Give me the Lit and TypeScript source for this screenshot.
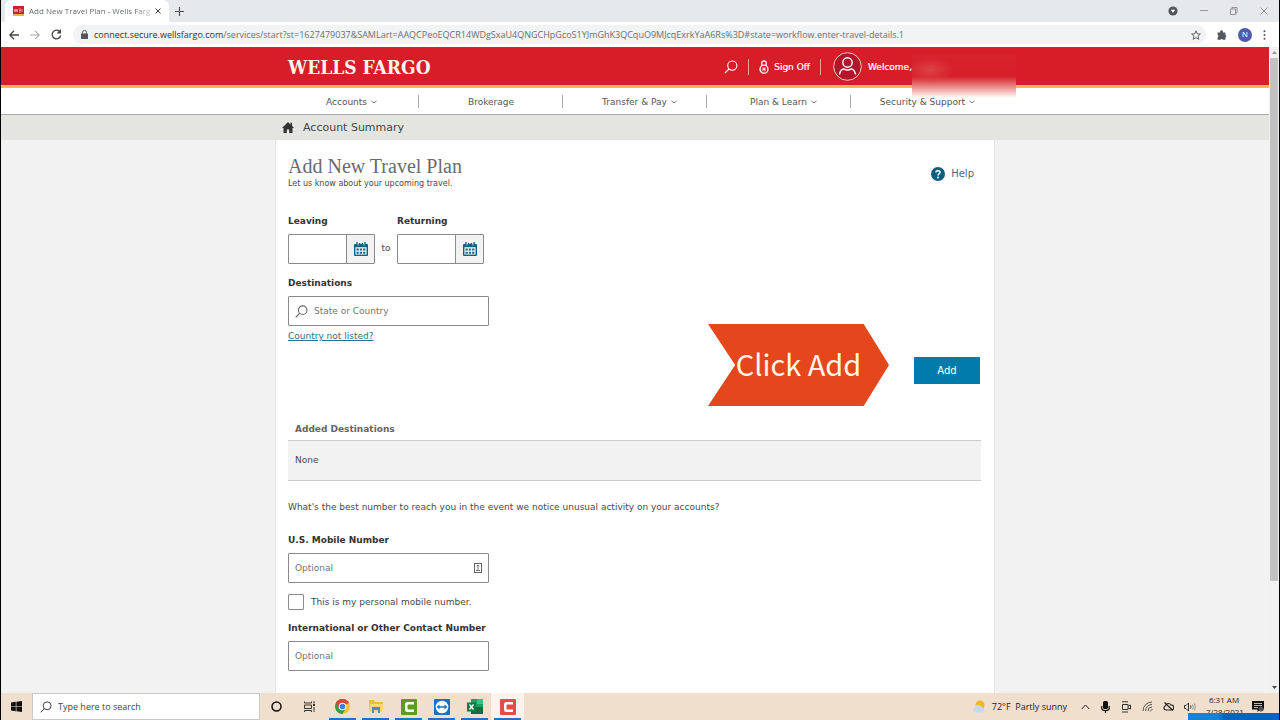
import { LitElement, html, css, svg } from "lit";
import { customElement } from "lit/decorators.js";

const chevron = html`<svg class="chev" viewBox="0 0 6 4" width="6" height="4" aria-hidden="true"><path d="M.5 .7 Q3 4.6 5.5 .7" fill="none" stroke="#777" stroke-width="1"/></svg>`;

const magnifier = (size: number, color: string, width = 1.2) => html`<svg width=${size} height=${size} viewBox="0 0 14 14" fill="none" stroke=${color} stroke-width=${width} aria-hidden="true"><circle cx="8.3" cy="5.6" r="4.6"/><path d="M5 9 L.8 13.2"/></svg>`;

const calendar = html`<svg width="14" height="14" viewBox="0 0 14 14" aria-hidden="true">
  <path d="M1 2h12a1 1 0 0 1 1 1v10a1 1 0 0 1-1 1H1a1 1 0 0 1-1-1V3a1 1 0 0 1 1-1z" fill="#0c6186"/>
  <path d="M1.4 5.2h11.2v7.4H1.4z" fill="#f2f5f6"/>
  <path d="M3 0v3.6M11 0v3.6M5.6 1v2M8.4 1v2" stroke="#0c6186" stroke-width="1.4"/>
  <path d="M4 1.6v2M10 1.6v2" stroke="#f2f5f6" stroke-width=".7"/>
  ${[0, 1, 2].map(c => svg`<path d="M${2.5 + c * 3.3} 6.6h2.3v2H${2.5 + c * 3.3}zM${2.5 + c * 3.3} 9.8h2.3v2H${2.5 + c * 3.3}z" fill="#1a6b8e"/>`)}
</svg>`;

const camtasia = (color: string) => html`<svg width="16" height="16" viewBox="0 0 16 16"><rect width="16" height="16" rx="1" fill=${color}/><path d="M13 3H6.500A2.500 2.500 0 0 0 4 5.500v5A2.500 2.500 0 0 0 6.500 13H13v-2.500H7.500a1 1 0 0 1-1-1v-3a1 1 0 0 1 1-1H13z" fill="#fff"/></svg>`;

@customElement("browser-chrome")
class BrowserChrome extends LitElement {
  static styles = css`
    :host { display: block; font: 9px/14px "Open Sans", "Noto Sans", sans-serif; color: #5f6368; }
    button { border: 0; padding: 0; background: none; display: flex; align-items: center; justify-content: center; }
    .tabs { height: 22px; background: #e5e9eb; display: flex; align-items: center; }
    .tab { align-self: stretch; margin-left: 4px; padding: 0 8px; background: #fff; border-radius: 6px 6px 0 0; display: flex; align-items: center; gap: 5px; font-size: 8px; }
    .title { white-space: nowrap; background: linear-gradient(90deg, #5f6368 88%, #c8cacc); -webkit-background-clip: text; background-clip: text; color: transparent; }
    .plus { margin-left: 6px; }
    .win { margin-left: auto; display: flex; gap: 22px; padding-right: 11px; align-items: center; }
    .bar { height: 25px; background: #fff; display: flex; align-items: center; padding: 0 13px 0 8px; gap: 11px; }
    .omni { flex: 1; display: flex; align-items: center; gap: 6px; height: 19px; border-radius: 10px; background: #f1f3f4; padding: 0 5px 0 8px; }
    .url { flex: 1; min-width: 0; color: #6b7075; }
    .host { color: #333; }
    .avatar { width: 14px; height: 14px; border-radius: 50%; background: #4f5bab; color: #fff; font-size: 8px; }
  `;
  render() {
    return html`
      <div class="tabs">
        <div class="tab">
          <svg width="11" height="10" viewBox="0 0 11 10"><path fill="#cd2027" d="M0 0h11v9H0z"/><path fill="#efb052" d="M0 8h11v2H0z"/><path d="M1 3l1 3 1-3 1 3 1-3M6 3h2M6 4.500h2M6 6h2M9 3v3" stroke="#f7c9c2" stroke-width=".7" fill="none"/></svg>
          <span class="title">Add New Travel Plan - Wells Farg</span>
          <button aria-label="Close tab"><svg width="6" height="6" viewBox="0 0 6 6"><path d="M.5 .5l5 5M5.500 .5l-5 5" stroke="#444"/></svg></button>
        </div>
        <button class="plus" aria-label="New tab"><svg width="9" height="9" viewBox="0 0 9 9"><path d="M4.500 0v9M0 4.500h9" stroke="#555" stroke-width="1.200"/></svg></button>
        <div class="win">
          <svg width="10" height="10" viewBox="0 0 10 10"><circle cx="5" cy="5" r="4.600" fill="#54585c"/><path d="M2.800 3.800h4.400L5 6.800z" fill="#fff"/></svg>
          <button aria-label="Minimize"><svg width="8" height="8"><path d="M0 3.500h8" stroke="#999"/></svg></button>
          <button aria-label="Restore"><svg width="8" height="8" viewBox="0 0 8 8" fill="none" stroke="#888" stroke-width=".9"><path d="M.5 2h5v5.500h-5zM2 2V.5h5V6H5.500"/></svg></button>
          <button aria-label="Close"><svg width="8" height="8" viewBox="0 0 8 8"><path d="M.5 .5l7 7M7.500 .5l-7 7" stroke="#888" stroke-width=".9"/></svg></button>
        </div>
      </div>
      <div class="bar">
        <button aria-label="Back"><svg width="10" height="10" viewBox="0 0 10 10"><path d="M10 5H1M5 .8L.8 5 5 9.200" fill="none" stroke="#444" stroke-width="1.300"/></svg></button>
        <button aria-label="Forward"><svg width="10" height="10" viewBox="0 0 10 10"><path d="M0 5h9M5 .8L9.200 5 5 9.200" fill="none" stroke="#aaa" stroke-width="1.100"/></svg></button>
        <button aria-label="Reload"><svg width="11" height="11" viewBox="0 0 11 11"><path d="M9 3A4.300 4.300 0 1 0 9.700 6.500" fill="none" stroke="#444" stroke-width="1.300"/><path d="M10 0v4.400H5.600z" fill="#444"/></svg></button>
        <div class="omni">
          <svg width="7" height="9" viewBox="0 0 7 9"><rect y="3.500" width="7" height="5.500" rx=".6" fill="#54585c"/><path d="M1.600 4V2.300a1.900 1.900 0 0 1 3.800 0V4" fill="none" stroke="#54585c" stroke-width="1"/></svg>
          <div class="url"><span class="host">connect.secure.wellsfargo.com</span>/services/start?st=1627479037&amp;SAMLart=AAQCPeoEQCR14WDgSxaU4QNGCHpGcoS1YJmGhK3QCquO9MJcqExrkYaA6Rs%3D#state=workflow.enter-travel-details.1</div>
          <svg width="10" height="10" viewBox="0 0 10 10"><path d="M5 .8l1.200 3 3.200.2L7 6.100l.8 3.200L5 7.600 2.200 9.300 3 6.100.6 4l3.200-.2z" fill="none" stroke="#555" stroke-width=".9"/></svg>
        </div>
        <svg width="10" height="10" viewBox="0 0 10 10"><path d="M.6 2.500h2.600a1.500 1.500 0 1 1 2.600 0h2.600v2.400a1.400 1.400 0 0 1 0 2.600v2.300H6.100a1.400 1.400 0 0 0-2.600 0H.6V7.200a1.300 1.300 0 0 0 0-2.400z" fill="#54585c"/></svg>
        <button class="avatar" aria-label="Profile">N</button>
        <button aria-label="Menu"><svg width="3" height="10" viewBox="0 0 3 10" fill="#555"><circle cx="1.500" cy="1.200" r="1"/><circle cx="1.500" cy="5" r="1"/><circle cx="1.500" cy="8.800" r="1"/></svg></button>
      </div>`;
  }
}

@customElement("bank-header")
class BankHeader extends LitElement {
  static styles = css`
    :host { display: block; font: 9px/12px "DejaVu Sans", Verdana, sans-serif; color: #555; }
    .inner { width: 720px; max-width: 100%; margin: 0 auto; box-sizing: border-box; }
    .brand { background: #d71e28; border-bottom: 3px solid #f0b955; border-top: 1px solid #bb3038; }
    .brand .inner { height: 37px; padding: 0 0 0 13px; display: flex; align-items: center; position: relative; }
    .logo { flex: 1; font: bold 19px/24px "DejaVu Serif Condensed", "Liberation Serif", serif; color: #fff3ec; text-decoration: none; }
    .tools { display: flex; align-items: center; color: #fff; margin-right: 83px; }
    .tools a, .tools button { color: #fff; text-decoration: none; display: flex; align-items: center; gap: 5px; background: none; border: 0; padding: 0; font: inherit; -webkit-text-stroke: .2px #fff; }
    .sep { width: 1px; height: 16px; background: #f0a49f; margin: 0 10px; }
    .user { display: flex; align-items: center; gap: 6px; margin-left: 2px; -webkit-text-stroke: .2px #fff; }
    .redact { position: absolute; left: 637px; top: 6px; width: 104px; height: 44px; z-index: 1; background: radial-gradient(ellipse 24px 12px at 18px 16px, #dc4148, transparent), linear-gradient(#d8232c 0, #d71e28 50%, #df4e50 62%, #f1aca7 82%, #fbe9e500 100%); }
    nav { background: #fff; border-bottom: 1px solid #aaa; }
    ul { list-style: none; padding: 0; margin: 0; display: grid; grid-template-columns: repeat(5, 1fr); }
    li { height: 26px; box-sizing: border-box; padding-top: 1px; display: flex; align-items: center; justify-content: center; background: linear-gradient(#aaa, #aaa) right center / 1px 13px no-repeat; }
    li:last-child { background: none; }
    .menu { padding-left: 9px; }
    li a { color: #555; text-decoration: none; display: flex; align-items: center; gap: 4px; }
    .crumb { background: #e4e5e1; }
    .crumb .inner { height: 25px; padding-left: 7px; display: flex; align-items: center; gap: 9px; font-size: 11px; color: #444; }
    .crumb a { color: inherit; text-decoration: none; }
  `;
  render() {
    const items = [["Accounts", 1], ["Brokerage", 0], ["Transfer & Pay", 1], ["Plan & Learn", 1], ["Security & Support", 1]];
    return html`
      <header class="brand"><div class="inner">
        <a class="logo" href="#">WELLS FARGO</a>
        <div class="tools">
          <button aria-label="Search">${magnifier(14, "#fff", 1.1)}</button>
          <span class="sep"></span>
          <a href="#"><svg width="10" height="14" viewBox="0 0 10 14" fill="none" stroke="#fff"><circle cx="5" cy="9.200" r="4" stroke-width="1.300"/><path d="M2.800 6V3a2.200 2.200 0 0 1 4.400 0v3" stroke-width="1.300"/><path d="M5 7v4.400M2.800 9.200h4.400M3.500 7.700l3 3M6.500 7.700l-3 3" stroke-width=".7"/></svg>Sign Off</a>
          <span class="sep"></span>
          <div class="user"><svg width="29" height="29" viewBox="0 0 29 29" fill="none" stroke="#fff"><circle cx="14.500" cy="14.500" r="13.800" fill="#b3152a" stroke="#f5c5c1" stroke-width="1"/><circle cx="14.500" cy="10.500" r="4.700" stroke-width="1.400"/><path d="M6.500 22.500c.5-3 2-5 4-5.600 2.500 1.400 5.500 1.400 8 0 2 .6 3.500 2.600 4 5.600" stroke-width="1.400"/></svg>Welcome,</div>
        </div>
        <div class="redact"></div>
      </div></header>
      <nav><ul class="inner">${items.map(([t, c]) => html`<li class=${c ? "menu" : ""}><a href="#">${t}${c ? chevron : ""}</a></li>`)}</ul></nav>
      <div class="crumb"><div class="inner">
        <svg width="12" height="11" viewBox="0 0 12 11"><path d="M6 0l2.500 2.400V.8H10v3L12 6h-1.500v5H7.200V7.500H4.800V11H1.500V6H0z" fill="#333"/></svg>
        <a href="#">Account Summary</a>
      </div></div>`;
  }
}

@customElement("travel-plan")
class TravelPlan extends LitElement {
  static styles = css`
    :host { display: block; flex: 1; font: 9px/12px "DejaVu Sans", Verdana, sans-serif; color: #4a4a4a; background: #f2f2f2; }
    .card { width: 720px; max-width: 100%; min-height: 100%; margin: 0 auto; box-sizing: border-box; background: #fff; border: solid #e6e6e6; border-width: 0 1px; padding: 14px 13px 0 12px; }
    .head { display: flex; justify-content: space-between; align-items: center; }
    h1 { margin: 0; font: 20px/24px "Liberation Serif", serif; color: #6b6b6b; }
    p { margin: 0; }
    .sub { font-size: 8px; }
    .help { display: flex; align-items: center; gap: 6px; color: #3b6f86; text-decoration: none; font-size: 10px; margin: 4px 7px 0 0; }
    label { font-weight: bold; color: #333; }
    .dates { display: flex; margin-top: 25px; align-items: flex-end; }
    .to { width: 22px; text-align: center; padding-bottom: 10px; }
    .field { display: flex; flex-direction: column; align-items: flex-start; gap: 7px; }
    .box { display: flex; align-items: center; box-sizing: border-box; height: 30px; border: 1px solid #8a8a8a; border-radius: 1px; background: #fff; }
    .date { width: 87px; }
    .date button { width: 28px; height: 100%; padding: 0; border: 0; border-left: 1px solid #8a8a8a; background: #f2f2f2; display: flex; align-items: center; justify-content: center; flex: none; }
    .wide { width: 201px; padding: 0 6px; gap: 6px; }
    input { font: inherit; color: inherit; min-width: 0; }
    .box input { flex: 1; width: 0; height: 100%; border: 0; padding: 0; background: none; outline: none; }
    input::placeholder { color: #757575; opacity: 1; }
    .dest { margin-top: 13px; }
    .link { display: inline-block; margin-top: 4px; color: #2d6f8c; }
    .action { position: relative; display: flex; justify-content: flex-end; margin: 15px 1px 0 0; }
    .add { width: 66px; height: 27px; border: 0; background: #007bab; color: #fff; font: inherit; font-size: 10px; padding: 0; }
    .callout { position: absolute; right: 91px; top: -33px; width: 181px; height: 82px; box-sizing: border-box; padding-bottom: 4px; display: flex; align-items: center; justify-content: center; background: #e4471b; clip-path: polygon(0 0, 86% 0, 100% 50%, 86% 100%, 0 100%, 15% 50%); color: #fff6e9; font: 29px/40px "Noto Sans CJK SC", sans-serif; white-space: nowrap; }
    table { width: 100%; border-collapse: collapse; margin-top: 33px; }
    th { text-align: left; color: #666; padding: 6px 7px 5px; }
    td { background: #f2f2f2; border: solid #ccc; border-width: 1px 0; padding: 13px 7px 14px; }
    .ask { margin-top: 20px; }
    .mobile { margin-top: 21px; }
    .own { display: flex; align-items: center; gap: 7px; margin-top: 11px; }
    .own label { font-weight: normal; color: #4a4a4a; }
    .own input { appearance: none; width: 16px; height: 16px; margin: 0; border: 1px solid #8a8a8a; border-radius: 1px; background: #fff; }
    .other { margin-top: 12px; }
  `;
  date(id: string, label: string) {
    return html`<div class="field"><label for=${id}>${label}</label>
      <div class="box date"><input id=${id} type="text"><button aria-label="Choose date">${calendar}</button></div></div>`;
  }
  render() {
    return html`<main class="card">
      <div class="head">
        <div><h1>Add New Travel Plan</h1><p class="sub">Let us know about your upcoming travel.</p></div>
        <a class="help" href="#"><svg width="14" height="14" viewBox="0 0 14 14"><circle cx="7" cy="7" r="7" fill="#0c5d80"/><path d="M5 5.500C5 3.300 9 3.300 9 5.500c0 1.500-2 1.400-2 3" stroke="#fff" stroke-width="1.500" fill="none"/><circle cx="7" cy="10.400" r="1" fill="#fff"/></svg>Help</a>
      </div>
      <div class="dates">${this.date("leaving", "Leaving")}<span class="to">to</span>${this.date("returning", "Returning")}</div>
      <div class="field dest"><label for="dest">Destinations</label>
        <div class="box wide">${magnifier(13, "#666", 1.2)}<input id="dest" type="text" placeholder="State or Country"></div></div>
      <a class="link" href="#">Country not listed?</a>
      <div class="action"><button class="add">Add</button><div class="callout">Click Add</div></div>
      <table><thead><tr><th>Added Destinations</th></tr></thead><tbody><tr><td>None</td></tr></tbody></table>
      <p class="ask">What's the best number to reach you in the event we notice unusual activity on your accounts?</p>
      <div class="field mobile"><label for="mobile">U.S. Mobile Number</label>
        <div class="box wide"><input id="mobile" type="tel" placeholder="Optional"><svg width="8" height="10" viewBox="0 0 8 10" fill="none" stroke="#666"><rect x=".5" y=".5" width="7" height="9"/><path d="M4 2v5M2.700 3.300L4 2l1.300 1.300M2 7.500h4" stroke-width=".9"/></svg></div></div>
      <div class="own"><input type="checkbox" id="own"><label for="own">This is my personal mobile number.</label></div>
      <div class="field other"><label for="other">International or Other Contact Number</label>
        <div class="box wide"><input id="other" type="tel" placeholder="Optional"></div></div>
    </main>`;
  }
}

@customElement("task-bar")
class TaskBar extends LitElement {
  static styles = css`
    :host { display: flex; height: 27px; position: relative; background: #f1dfce; color: #222; font: 9px/13px "Open Sans", "Noto Sans", sans-serif; overflow: hidden; }
    button { border: 0; padding: 0; background: none; display: flex; align-items: center; justify-content: center; }
    .start { width: 31px; }
    .search { width: 228px; box-sizing: border-box; background: #fff; border: 1px solid #c9c9c9; display: flex; align-items: center; gap: 6px; padding: 0 7px; }
    .search input { flex: 1; min-width: 0; border: 0; padding: 0; font: inherit; outline: none; }
    .search input::placeholder { color: #444; opacity: 1; }
    .app { width: 33px; box-sizing: border-box; }
    .open { background: linear-gradient(#2a6fbe, #2a6fbe) center bottom / 27px 2px no-repeat; }
    .active { background-color: #fbf3ec; }
    .tray { margin-left: auto; display: flex; align-items: center; gap: 10px; padding-right: 15px; }
    .weather { display: flex; align-items: center; gap: 6px; margin-right: 4px; }
    .clock { align-self: flex-start; width: 36px; text-align: center; font-size: 8px; line-height: 12px; padding-top: 1px; white-space: nowrap; }
    .strip { position: absolute; right: 0; bottom: 0; width: 91px; height: 7px; background: linear-gradient(90deg, #1b7fe0 0 30px, #0b62c4 36px); }
  `;
  render() {
    return html`
      <button class="start" aria-label="Start"><svg width="11" height="11" viewBox="0 0 11 11" fill="#111"><path d="M0 1.500l4.800-.7v4.400H0zM5.400 .7L11 0v5.200H5.400zM0 5.800h4.800v4.400L0 9.500zM5.400 5.800H11V11l-5.600-.7z"/></svg></button>
      <div class="search">${magnifier(12, "#333", 1.1)}<input type="text" aria-label="Search" placeholder="Type here to search"></div>
      <button class="app" aria-label="Cortana"><svg width="11" height="11" viewBox="0 0 11 11"><circle cx="5.500" cy="5.500" r="4.500" fill="none" stroke="#111" stroke-width="1.500"/></svg></button>
      <button class="app" aria-label="Task view"><svg width="11" height="11" viewBox="0 0 11 11" fill="none" stroke="#333"><path d="M.5 .5v1.500h7V.5M.5 4h7v3.500h-7zM.5 11V9.500h7V11M10 0v2.500M10 6v5"/><path d="M9 4h2" stroke-width="2"/></svg></button>
      <button class="app open" aria-label="Chrome"><svg width="15" height="15" viewBox="0 0 16 16"><circle cx="8" cy="8" r="8" fill="#f7c331"/><path d="M8 8L1.100 4A8 8 0 0 1 14.900 4z" fill="#dc4437"/><path d="M8 8L1.100 4A8 8 0 0 0 8 16l3.500-6z" fill="#3b9a4f"/><path d="M8 4h6.900A8 8 0 0 0 1.100 4L4.500 10z" fill="#dc4437"/><circle cx="8" cy="8" r="4" fill="#fff"/><circle cx="8" cy="8" r="3" fill="#3f7de0"/></svg></button>
      <button class="app open" aria-label="File Explorer"><svg width="14" height="13" viewBox="0 0 14 13"><path d="M0 0h5l1 2h8v10H0z" fill="#eeb945"/><path d="M1 4h13v8H0z" fill="#f9d978"/><path d="M3 7h8v6H9v-3H5v3H3z" fill="#4591c7"/></svg></button>
      <button class="app open" aria-label="Camtasia">${camtasia("#5b9e1d")}</button>
      <button class="app open" aria-label="TeamViewer"><svg width="16" height="16" viewBox="0 0 16 16"><rect width="16" height="16" rx="1" fill="#1771c8"/><circle cx="8" cy="8" r="6.300" fill="#fff"/><path d="M2.500 8l3-2.400v1.600h5V5.600l3 2.400-3 2.400V8.800h-5v1.600z" fill="#1771c8"/></svg></button>
      <button class="app open" aria-label="Excel"><svg width="16" height="15" viewBox="0 0 16 15"><path d="M4 0h12v15H4z" fill="#209e61"/><path d="M10 0h6v5h-6z" fill="#33c481"/><path d="M4 8h12v7H4z" fill="#17693f"/><rect y="3.500" width="9" height="9" fill="#107c41"/><path d="M2.500 5.500l4 5M6.500 5.500l-4 5" stroke="#fff" stroke-width="1.300"/></svg></button>
      <button class="app open active" aria-label="Camtasia Recorder">${camtasia("#e44d42")}</button>
      <div class="tray">
        <div class="weather"><svg width="14" height="13" viewBox="0 0 14 13"><circle cx="8" cy="5" r="4.500" fill="#f6b12d"/><path d="M3 12.500a3 3 0 0 1 0-5.500 3.500 3.500 0 0 1 6.500 0 2.800 2.800 0 0 1 .5 5.500z" fill="#c3daf0"/></svg><span>72°F&nbsp; Partly sunny</span></div>
        <svg width="9" height="6" viewBox="0 0 9 6"><path d="M.7 5l3.800-4 3.800 4" fill="none" stroke="#222"/></svg>
        <svg width="11" height="12" viewBox="-1 0 11 12"><rect x="2" width="5" height="8" rx="1.500" fill="#111"/><path d="M.8 5v2.500q0 2 3.700 2t3.700-2V5M4.500 9v3" fill="none" stroke="#111" stroke-width="1.200"/></svg>
        <svg width="11" height="12" viewBox="0 0 11 12" fill="none" stroke="#333"><path d="M1.500 3.500h5.500v5H1.500zM7 5l2.500-1v4L7 7M1 .8h6M1 11h6"/></svg>
        <svg width="11" height="11" viewBox="0 0 11 11" fill="none" stroke="#555"><path d="M1 10A9 9 0 0 1 10 1M3.500 10A6.500 6.500 0 0 1 10 3.500M6 10a4 4 0 0 1 4-4M8 10.500l2.500-2.500"/></svg>
        <svg width="11" height="9" viewBox="0 0 11 9" fill="none" stroke="#222"><path d="M3 8a2.200 2.200 0 0 1-.5-4.300A3 3 0 0 1 8 3a2.500 2.500 0 0 1 .5 5zM1.500 .5l8.500 8" stroke-width="1.200"/></svg>
        <svg width="12" height="10" viewBox="0 0 12 10" fill="none" stroke="#333"><path d="M.5 3.500H2L4.500 1v8L2 6.500H.5zM6.500 3.500q1 1.500 0 3"/><path d="M8.500 2.500q1.500 2.500 0 5M10.500 1.500q1.500 3.500 0 7" stroke="#999"/></svg>
        <div class="clock">6:31 AM<br>7/28/2021</div>
        <svg width="12" height="11" viewBox="0 0 12 11"><path d="M0 0h12v8.500H8L5.500 11V8.500H0z" fill="#111"/><path d="M2 2.500h8M2 4.500h8M2 6.500h4" stroke="#f1dfce" stroke-width=".8"/><circle cx="9" cy="8" r="2.500" fill="#555"/></svg>
      </div>
      <div class="strip"></div>`;
  }
}

@customElement("app-root")
class AppRoot extends LitElement {
  static styles = css`
    :host { display: flex; flex-direction: column; height: 100vh; overflow: hidden; background: #fff; box-sizing: border-box; border: solid #000; border-width: 0 1px; }
    .view { flex: 1; min-height: 0; display: flex; }
    .page { flex: 1; min-width: 0; display: flex; flex-direction: column; overflow: hidden; }
    .scroll { width: 10px; background: #f1f1f1; display: flex; flex-direction: column; align-items: center; gap: 4px; padding: 4px 0; box-sizing: border-box; }
    .thumb { flex: 0 0 82%; width: 8px; background: #c1c1c1; }
    .down { margin-top: auto; }
  `;
  render() {
    return html`
      <browser-chrome></browser-chrome>
      <div class="view">
        <div class="page"><bank-header></bank-header><travel-plan></travel-plan></div>
        <div class="scroll">
          <svg width="5" height="3"><path d="M0 3L2.500 0 5 3z" fill="#999"/></svg>
          <div class="thumb"></div>
          <svg class="down" width="5" height="3"><path d="M0 0l2.500 3L5 0z" fill="#444"/></svg>
        </div>
      </div>
      <task-bar></task-bar>`;
  }
}
